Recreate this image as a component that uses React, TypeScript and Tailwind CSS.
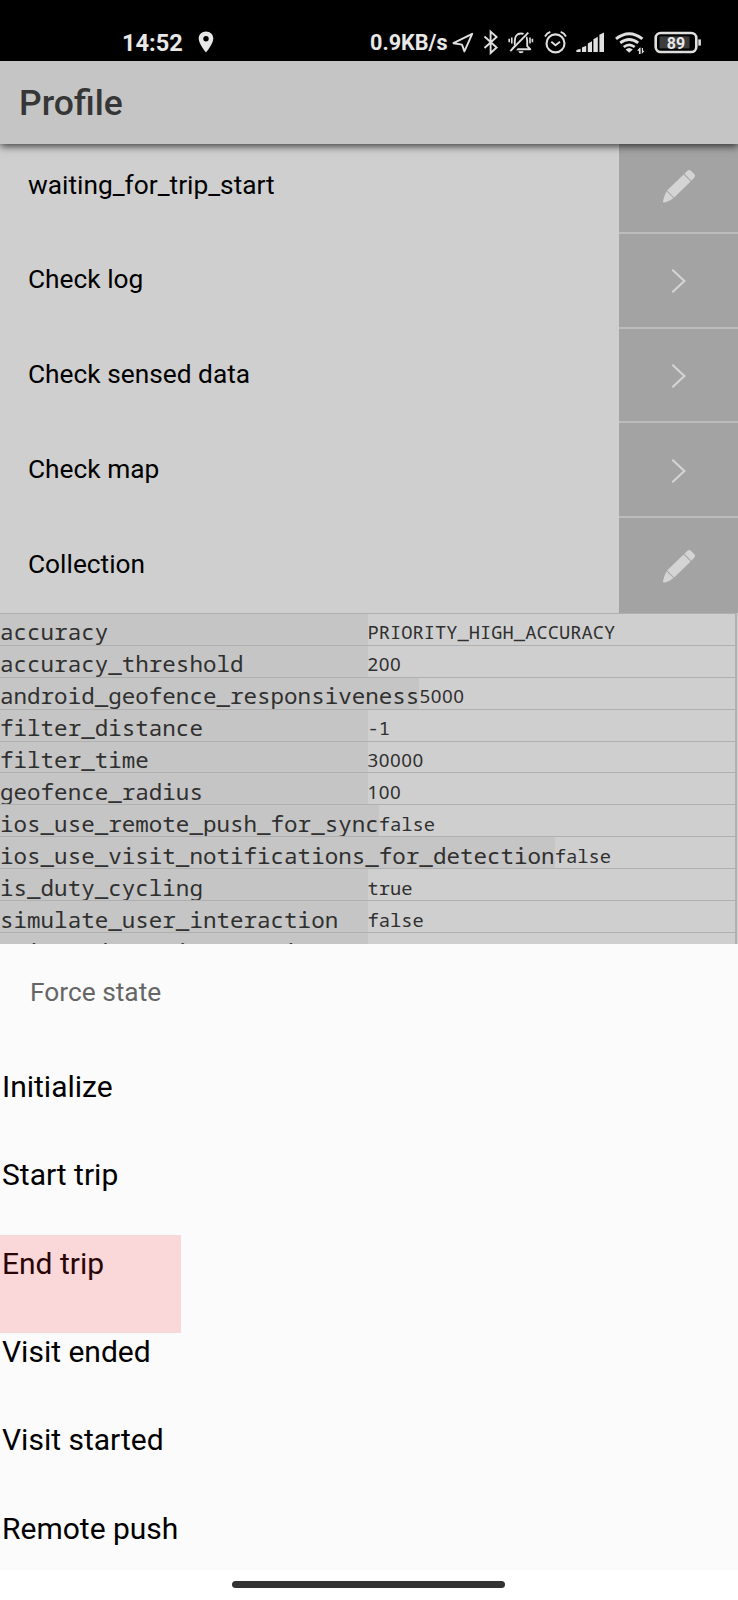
import React from "react";

const settings: [string, string][] = [
  ["accuracy", "PRIORITY_HIGH_ACCURACY"],
  ["accuracy_threshold", "200"],
  ["android_geofence_responsiveness", "5000"],
  ["filter_distance", "-1"],
  ["filter_time", "30000"],
  ["geofence_radius", "100"],
  ["ios_use_remote_push_for_sync", "false"],
  ["ios_use_visit_notifications_for_detection", "false"],
  ["is_duty_cycling", "true"],
  ["simulate_user_interaction", "false"],
  ["trip_end_stationary_mins", ""],
];

const rows: { label: string; icon: "pencil" | "chevron" }[] = [
  { label: "waiting_for_trip_start", icon: "pencil" },
  { label: "Check log", icon: "chevron" },
  { label: "Check sensed data", icon: "chevron" },
  { label: "Check map", icon: "chevron" },
  { label: "Collection", icon: "pencil" },
];

const actions = ["Initialize", "Start trip", "End trip", "Visit ended", "Visit started", "Remote push"];

function Pencil() {
  return (
    <svg width="34" height="34" viewBox="0 0 34 34" fill="#d4d4d4" className="block">
      <path d="M21.6 5.5 28.6 12.5 12.2 28.6 5 21.5Z" />
      <path d="M22.4 4.8 25.6 1.5Q27.1.2 28.8 1.8L32.3 5.3Q33.8 7 32.4 8.5L29.3 11.8Z" />
      <path d="M4.5 22.3 11.5 29.1 7.9 31.5 3.2 33.4Q.9 33.9 1 32.2L2.4 27Z" />
    </svg>
  );
}

function Chevron() {
  return (
    <svg width="34" height="34" viewBox="0 0 34 34" fill="none" stroke="#d4d4d4" strokeWidth="2.1" className="block">
      <path d="M10.3 5.7 22.4 17 10.3 28.3" />
    </svg>
  );
}

function StatusIcons() {
  return (
    <svg
      width="254"
      height="30"
      viewBox="448 28 254 30"
      fill="none"
      stroke="#e0e0e0"
      strokeWidth="1.9"
      strokeLinejoin="round"
      className="block"
    >
      <path d="M472.2 33.8 453.4 43.2 462 44.6 464.4 51.4Z" />
      <path d="M484.5 36.5 496.6 47.5 490.6 53V31.6L496.6 37 484.5 48" strokeLinejoin="miter" />
      <path d="M512.5 49.2H530.2L527.2 46.2V40.5C527.2 36.5 525 33.5 521 33.5S514.8 36.5 514.8 40.5V46.2Z" />
      <path d="M518.3 51.2H523.7Q523.3 53.2 521 53.2T518.3 51.2Z" fill="#e0e0e0" stroke="none" />
      <path d="M513 51 527.5 32" stroke="#000" strokeWidth="4" />
      <path d="M510.3 51.2 528.3 32.6" />
      <path d="M511.8 37.5V43.5M509.2 38.7V42.3M530 37.5V43.5M532.4 38.7V42.3" strokeWidth="1.6" />
      <circle cx="555.5" cy="43.4" r="9" strokeWidth="2.1" />
      <path d="M551.3 41.8 555.5 45.2 560 41.8M545 36.4Q547 33 550.3 31.9M560.7 31.9Q564 33 566 36.4" />
      <g fill="#e0e0e0" stroke="none">
        <path d="M576.4 52V50L580.6 48.8V52ZM582 52V47.6L586.2 45.8V52ZM587.8 52V43.4L592 41.2V52ZM593.4 52V39.2L597.8 36.8V52ZM599.4 52V34.8L604 32.4V52Z" />
        <path d="M629.2 52.8 625.6 49.4Q629.2 46.4 632.8 49.4Z" />
        <path d="M639.9 47.6 637 50.8H638.9V54H640.6V47.6ZM641.8 48V54L644.6 50.8H643V48Z" />
      </g>
      <path d="M616 38.9Q629.2 28.6 642.4 38.9" strokeWidth="3" />
      <path d="M620.2 42.9Q629.2 36 638.2 42.9" strokeWidth="2.8" />
      <path d="M623.7 47Q629.2 42.6 634.7 47" strokeWidth="2.6" />
      <rect x="655.7" y="33" width="40.6" height="19" rx="5" strokeWidth="2.6" />
      <rect x="659.5" y="36.4" width="30" height="12" fill="#3c3c3c" stroke="none" />
      <path d="M699.6 39.4V45.6" strokeWidth="2.6" />
      <text
        x="676"
        y="48.6"
        textAnchor="middle"
        fill="#e8e8e8"
        stroke="none"
        fontFamily="Roboto, sans-serif"
        fontWeight="700"
        fontSize="16"
      >
        89
      </text>
    </svg>
  );
}

export default function App() {
  return (
    <div className="flex h-[1600px] w-[738px] flex-col overflow-hidden bg-[#fbfbfb] font-[Roboto,sans-serif]">
      <div className="flex h-[61px] shrink-0 items-end bg-black pb-[3px] text-[#e8e8e8]">
        <span className="ml-[122px] w-[76px] text-[23.6px] leading-[30px] font-bold whitespace-nowrap">14:52</span>
        <svg width="16" height="22" viewBox="0 0 16 22" className="mb-[5px]">
          <path
            fill="#e8e8e8"
            fillRule="evenodd"
            d="M8 .6C3.8.6.7 3.7.7 7.7.7 12.8 8 21.4 8 21.4S15.3 12.8 15.3 7.7C15.3 3.7 12.2.6 8 .6ZM8 5.1A2.7 2.7 0 1 1 8 10.5 2.7 2.7 0 1 1 8 5.1Z"
          />
        </svg>
        <span className="ml-[156px] w-[78px] text-[21.6px] leading-[30px] font-bold whitespace-nowrap">0.9KB/s</span>
        <StatusIcons />
      </div>

      <header className="z-10 flex h-[83px] shrink-0 items-center bg-[#c5c5c5] pt-[2px] pl-[19px] shadow-[0_2px_8px_rgba(0,0,0,0.75)]">
        <h1 className="text-[35.5px] leading-none font-medium text-[#363636]">Profile</h1>
      </header>

      <main className="flex h-[800px] shrink-0 flex-col overflow-hidden bg-[#cfcfcf]">
        <div className="-mt-[5px] h-[474px] shrink-0">
          {rows.map((row) => (
            <div key={row.label} className="flex h-[94.8px]">
              <span className="flex-1 pt-[30.5px] pl-[28px] text-[26.3px] leading-[30px] text-black">{row.label}</span>
              <div
                className={
                  row.label === "Collection"
                    ? "flex w-[119.5px] items-center justify-center bg-[#a3a3a3] pl-[2px]"
                    : "flex w-[119.5px] items-center justify-center border-b-2 border-[#bcbcbc] bg-[#a3a3a3] pt-[2px] pl-[2px]"
                }
              >
                {row.icon === "pencil" ? <Pencil /> : <Chevron />}
              </div>
            </div>
          ))}
        </div>
        <div className="-mt-[0.3px] w-[737px] border-t border-r-2 border-[#b0b0b0] font-['Noto_Sans_Mono','DejaVu_Sans_Mono',monospace] text-[#303030]">
          {settings.map(([key, value]) => (
            <div key={key} className="flex h-[31.96px] border-b border-[#b0b0b0]">
              <span className="min-w-[367.5px] shrink-0 overflow-hidden bg-[#c5c5c5] pt-[6.6px] text-[22.55px] leading-[24px]">
                {key}
              </span>
              {/^\d+$/.test(value) ? (
                <span className="pt-[5.6px] font-['Noto_Sans',sans-serif] text-[18.78px] leading-[27px] tracking-[0.53px]">
                  {value}
                </span>
              ) : (
                <span className="pt-[5.6px] text-[18.78px] leading-[27px]">{value}</span>
              )}
            </div>
          ))}
        </div>
      </main>

      <section className="flex flex-1 flex-col">
        <h2 className="h-[98px] pt-[32px] pl-[30px] text-[26.3px] leading-[32px] text-[#666]">Force state</h2>
        {actions.map((label) =>
          label === "End trip" ? (
            <div key={label} className="relative h-[88.4px] shrink-0 pl-[2px] text-[30px] leading-[36px] text-[#2a0507]">
              <div className="absolute top-[16px] left-0 h-[98px] w-[180.5px] bg-[#fad7d8]" />
              <span className="relative block pt-[26.9px]">{label}</span>
            </div>
          ) : label === "Remote push" ? (
            <div key={label} className="h-[86px] shrink-0 pt-[26.9px] pl-[2px] text-[30px] leading-[36px] text-black">
              {label}
            </div>
          ) : (
            <div key={label} className="relative h-[88.4px] shrink-0 pt-[26.9px] pl-[2px] text-[30px] leading-[36px] text-black">
              {label}
            </div>
          ),
        )}
        <div className="flex flex-1 items-end bg-white pb-[12px] pl-[232px]">
          <div className="h-[7px] w-[273px] rounded-full bg-[#333]" />
        </div>
      </section>
    </div>
  );
}
